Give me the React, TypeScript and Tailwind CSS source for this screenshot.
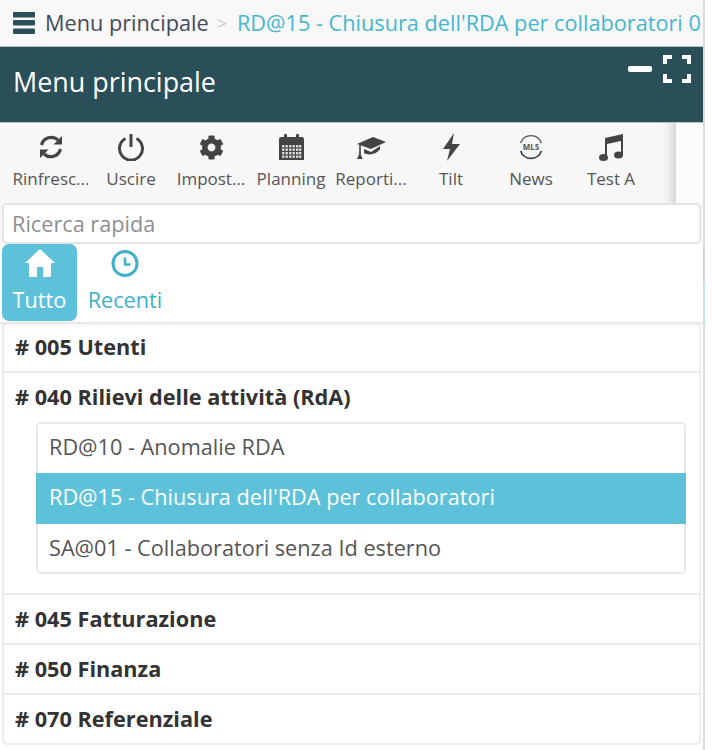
import type { ReactNode } from "react";
import { FaCog } from "react-icons/fa";

const dark = "#444444";

function BarsIcon() {
  return (
    <svg width="22" height="22" viewBox="0 0 22 22" fill="#2a4f58" className="shrink-0 mr-[10px]">
      <rect x="0" y="0" width="22" height="5.5" rx="1" />
      <rect x="0" y="8" width="22" height="5.5" rx="1" />
      <rect x="0" y="16.5" width="22" height="5.5" rx="1" />
    </svg>
  );
}

function RefreshIcon() {
  return (
    <svg width="28" height="28" viewBox="0 0 28 28" fill="none" stroke={dark} strokeWidth="3.2">
      <path d="M4.5 12A10 10 0 0 1 21 7" />
      <path d="M25 3v8.5h-8.5z" fill={dark} stroke="none" />
      <path d="M23.5 16A10 10 0 0 1 7 21" />
      <path d="M3 25v-8.5h8.5z" fill={dark} stroke="none" />
    </svg>
  );
}

function PowerIcon() {
  return (
    <svg width="28" height="28" viewBox="0 0 28 28" fill="none" stroke={dark} strokeWidth="3">
      <path d="M8.5 5.5A11.5 11.5 0 1 0 19.5 5.5" />
      <path d="M14 1V14" />
    </svg>
  );
}

function CalendarIcon() {
  const cols = [4, 7.5, 11, 14.5, 18, 21];
  const rows = [12, 15.5, 19, 22.5];
  return (
    <svg width="27" height="28" viewBox="0 0 27 28">
      <path d="M1 6a2 2 0 0 1 2-2h21a2 2 0 0 1 2 2v21H1z" fill={dark} />
      <rect x="6" y="1" width="3" height="5" rx="1" fill={dark} />
      <rect x="18" y="1" width="3" height="5" rx="1" fill={dark} />
      {rows.map((y) =>
        cols.map((x) => <rect key={`${x}-${y}`} x={x} y={y} width="2.4" height="2.4" fill="#d8d8d8" />),
      )}
    </svg>
  );
}

function CapIcon() {
  return (
    <svg width="32" height="28" viewBox="0 0 32 28" fill={dark}>
      <path d="M2 11L18 4L31 9L16 16Z" />
      <path d="M9 16L16 19L25 13V16C22 21 14 23 9 20Z" />
      <path d="M5 12V21" stroke={dark} strokeWidth="1.6" />
      <path d="M2 26L5 19L7.5 26Z" />
    </svg>
  );
}

function BoltIcon() {
  return (
    <svg width="20" height="28" viewBox="0 0 20 28" fill={dark}>
      <path d="M13 0L2 16H9L6 28L19 11H11Z" />
    </svg>
  );
}

function MusicIcon() {
  return (
    <svg width="26" height="28" viewBox="0 0 26 28" fill={dark}>
      <path d="M7 5L25 1V22H23V8L9 11V25H7Z" />
      <ellipse cx="5.5" cy="24.5" rx="4.5" ry="3.5" />
      <ellipse cx="20.5" cy="22" rx="4.5" ry="3.5" />
    </svg>
  );
}

function NewsIcon() {
  return (
    <svg width="26" height="26" viewBox="0 0 26 26" fill="none">
      <path d="M2.6 9A11 11 0 0 1 23.4 9" stroke="#555" strokeWidth="1.4" />
      <path d="M2.6 17A11 11 0 0 0 23.4 17" stroke="#444" strokeWidth="1.8" />
      <text x="13" y="15.8" textAnchor="middle" fontSize="8" fontWeight="700" fill="#555" fontFamily="'Open Sans', sans-serif">MLS</text>
    </svg>
  );
}

function HomeIcon() {
  return (
    <svg width="30" height="28" viewBox="0 0 30 28" fill="white">
      <path d="M15 0L30 14H26V28H18V18H12V28H4V14H0Z" />
    </svg>
  );
}

function ClockIcon() {
  return (
    <svg width="28" height="28" viewBox="0 0 28 28" fill="none" stroke="#3fb0c9">
      <circle cx="14" cy="14.5" r="12" strokeWidth="3" />
      <path d="M14 8.5V15.5H19.5" strokeWidth="2.5" />
    </svg>
  );
}

const tools = [
  { label: "Rinfresc...", icon: <RefreshIcon /> },
  { label: "Uscire", icon: <PowerIcon /> },
  { label: "Impost...", icon: <FaCog size={25} /> },
  { label: "Planning", icon: <CalendarIcon /> },
  { label: "Reporti...", icon: <CapIcon /> },
  { label: "Tilt", icon: <BoltIcon /> },
  { label: "News", icon: <NewsIcon /> },
  { label: "Test A", icon: <MusicIcon /> },
];

function Group({ title, children }: { title: string; children?: ReactNode }) {
  return (
    <div className="border-b-2 border-[#ececec] last:border-b-0">
      <div className="h-[48px] pl-[11px] flex items-center text-[21.7px] font-bold text-[#333]">{title}</div>
      {children}
    </div>
  );
}

export default function App() {
  return (
    <div className="w-[712px] h-[750px] bg-white overflow-hidden font-['Open_Sans',sans-serif]">
      <div className="w-[705px] h-full border-r-2 border-[#dddddd] flex flex-col">
        <div className="h-[46px] bg-[#f8f8f8] flex items-center pl-[13px] whitespace-nowrap overflow-hidden text-[21.7px]">
          <BarsIcon />
          <span className="text-[#444a5a]">Menu principale</span>
          <span className="text-[#c4c4c4] ml-[8px] mr-[10px] text-[18px]">&gt;</span>
          <span className="text-[#45b6cf]">RD@15 - Chiusura dell'RDA per collaboratori 0</span>
        </div>
        <div className="h-[77px] bg-[#2a4f58] border-y border-[#b8c2c4] flex justify-between pl-[13px] pr-[12px] text-white">
          <div className="text-[26.9px] mt-[15px] leading-[40px]">Menu principale</div>
          <div className="flex items-start mt-[8px] gap-[11px]">
            <div className="w-[24px] h-[6px] bg-white rounded-[2px] mt-[11px]" />
            <svg width="28" height="28" viewBox="0 0 28 28" fill="none" stroke="white" strokeWidth="4">
              <path d="M2 9V2H9M19 2H26V9M2 19V26H9M19 26H26V19" />
            </svg>
          </div>
        </div>
        <div className="h-[80px] bg-[#fcfcfc] flex">
          <div className="w-[676px] pl-[11px] flex bg-[#f7f7f7] shadow-[inset_-14px_0_10px_-10px_rgba(0,0,0,0.16)]">
            {tools.map((t) => (
              <div key={t.label} className="w-[80px] flex flex-col items-center shrink-0">
                <div className="h-[30px] mt-[9px] flex items-center justify-center text-[#444]">{t.icon}</div>
                <div className="mt-[5px] text-[17px] leading-[24px] text-[#555] whitespace-nowrap">{t.label}</div>
              </div>
            ))}
          </div>
        </div>
        <div className="h-[41px] px-[2px] bg-[#f7f7f7]">
          <div className="h-full bg-white border-2 border-[#e4e4e4] rounded-[5px] flex items-center pl-[8px] pt-[1px] text-[21.7px] text-[#8f8f8f]">Ricerca rapida</div>
        </div>
        <div className="h-[78px] flex pl-[2px] shadow-[0_2px_3px_rgba(0,0,0,0.12)] relative">
          <div className="w-[75px] h-[77px] bg-[#5dc1d9] rounded-[7px] flex flex-col items-center text-white">
            <div className="mt-[5px] h-[28px]"><HomeIcon /></div>
            <div className="mt-[9px] text-[21.7px] leading-[28px]">Tutto</div>
          </div>
          <div className="w-[96px] flex flex-col items-center text-[#3fb0c9]">
            <div className="mt-[5px] h-[28px]"><ClockIcon /></div>
            <div className="mt-[9px] text-[21.7px] leading-[28px]">Recenti</div>
          </div>
          <div className="absolute right-[-2px] top-[38px] w-[2px] h-[40px] bg-[#bfe6ef]" />
        </div>
        <div className="mx-[2px] mt-[1px] h-[422px] border-2 border-t-0 border-[#ececec] rounded-[5px] bg-white">
          <Group title="# 005 Utenti" />
          <Group title="# 040 Rilievi delle attività (RdA)">
            <div className="ml-[32px] mr-[13px] mt-[1px] mb-[19px] border-2 border-[#e8e8e8] rounded-[5px] text-[21.7px]">
              <div className="h-[49px] pl-[11px] pb-[2px] flex items-center text-[#555]">RD@10 - Anomalie RDA</div>
              <div className="h-[51px] -mx-[2px] pl-[13px] pb-[2px] flex items-center bg-[#5dc1d9] text-white">RD@15 - Chiusura dell'RDA per collaboratori</div>
              <div className="h-[48px] pl-[11px] pt-[1px] flex items-center text-[#555]">SA@01 - Collaboratori senza Id esterno</div>
            </div>
          </Group>
          <Group title="# 045 Fatturazione" />
          <Group title="# 050 Finanza" />
          <Group title="# 070 Referenziale" />
        </div>
      </div>
    </div>
  );
}
